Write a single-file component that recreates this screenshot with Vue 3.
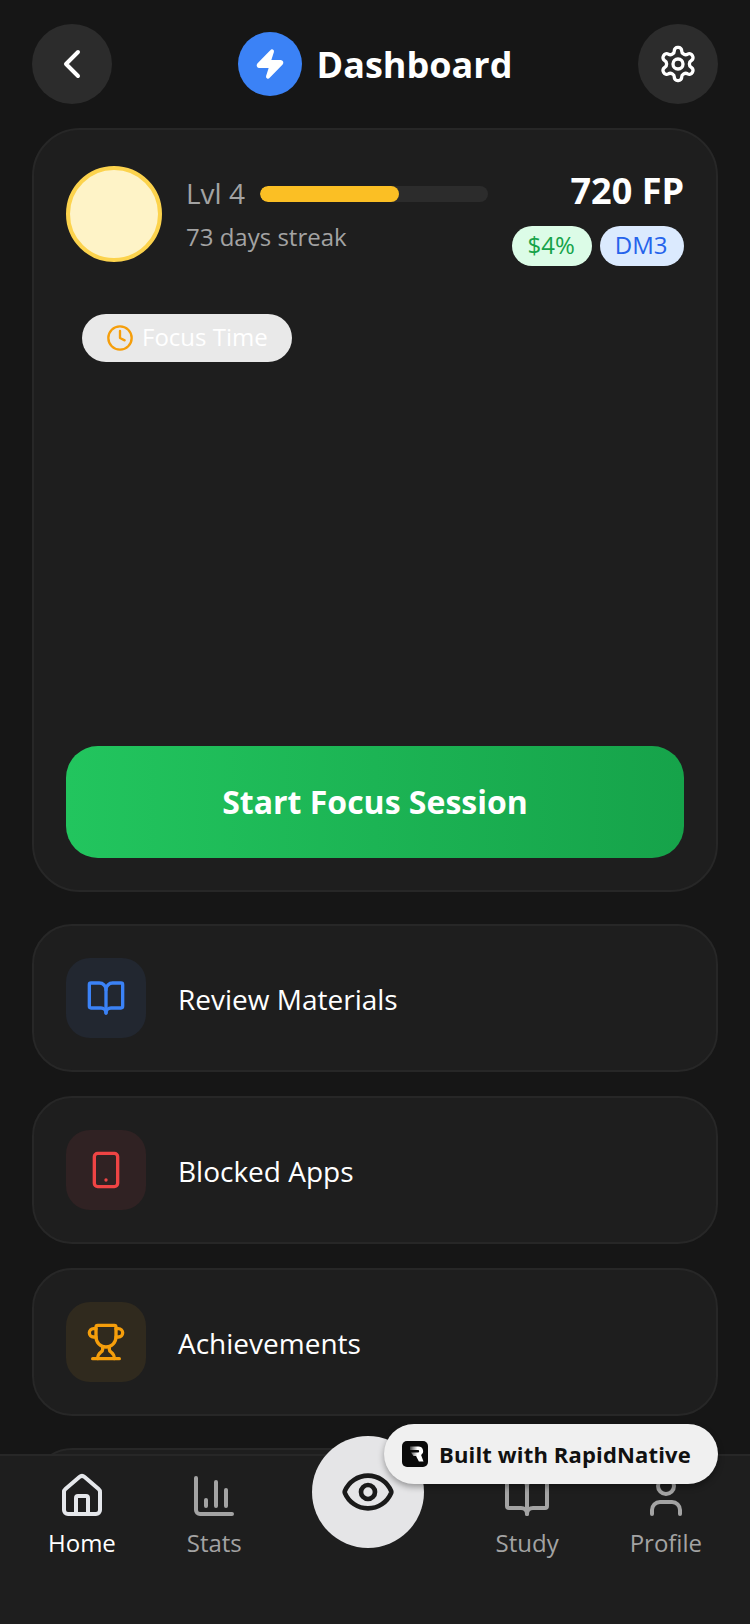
<script setup>
const rows = [
  { id: 'review', label: 'Review Materials', tone: 'blue' },
  { id: 'blocked', label: 'Blocked Apps', tone: 'red' },
  { id: 'achievements', label: 'Achievements', tone: 'amber' }
]
</script>

<template>
  <div class="screen">
    <main class="content">
      <header class="header">
        <button class="round-btn" type="button" aria-label="Back">
          <svg class="ico" width="48" height="48" viewBox="0 0 24 24"><path d="m15 18-6-6 6-6" /></svg>
        </button>
        <div class="brand">
          <span class="logo">
            <svg class="ico zap" width="32" height="32" viewBox="0 0 24 24"><path d="M4 14a1 1 0 0 1-.78-1.63l9.9-10.2a.5.5 0 0 1 .86.46l-1.92 6.02A1 1 0 0 0 13 10h7a1 1 0 0 1 .78 1.63l-9.9 10.2a.5.5 0 0 1-.86-.46l1.92-6.02A1 1 0 0 0 11 14z" /></svg>
          </span>
          <h1 class="title">Dashboard</h1>
        </div>
        <button class="round-btn" type="button" aria-label="Settings">
          <svg class="ico" width="40" height="40" viewBox="0 0 24 24"><path d="M12.22 2h-.44a2 2 0 0 0-2 2v.18a2 2 0 0 1-1 1.73l-.43.25a2 2 0 0 1-2 0l-.15-.08a2 2 0 0 0-2.73.73l-.22.38a2 2 0 0 0 .73 2.73l.15.1a2 2 0 0 1 1 1.72v.51a2 2 0 0 1-1 1.74l-.15.09a2 2 0 0 0-.73 2.73l.22.38a2 2 0 0 0 2.73.73l.15-.08a2 2 0 0 1 2 0l.43.25a2 2 0 0 1 1 1.73V20a2 2 0 0 0 2 2h.44a2 2 0 0 0 2-2v-.18a2 2 0 0 1 1-1.73l.43-.25a2 2 0 0 1 2 0l.15.08a2 2 0 0 0 2.73-.73l.22-.39a2 2 0 0 0-.73-2.73l-.15-.08a2 2 0 0 1-1-1.74v-.5a2 2 0 0 1 1-1.74l.15-.09a2 2 0 0 0 .73-2.73l-.22-.38a2 2 0 0 0-2.73-.73l-.15.08a2 2 0 0 1-2 0l-.43-.25a2 2 0 0 1-1-1.73V4a2 2 0 0 0-2-2z" /><circle cx="12" cy="12" r="3" /></svg>
        </button>
      </header>

      <section class="hero">
        <div class="stats">
          <div class="avatar"></div>
          <div class="progress">
            <div class="level">
              <span class="level-text">Lvl 4</span>
              <span class="track"><span class="fill"></span></span>
            </div>
            <div class="streak">73 days streak</div>
          </div>
          <div class="score">
            <div class="points">720 FP</div>
            <div class="chips">
              <span class="chip chip-green">$4%</span>
              <span class="chip chip-blue">DM3</span>
            </div>
          </div>
        </div>

        <div class="stage">
          <div class="pill">
            <svg class="ico" width="28" height="28" viewBox="0 0 24 24"><circle cx="12" cy="12" r="10" /><path d="M12 6v6l4 2" /></svg>
            <span>Focus Time</span>
          </div>
        </div>

        <button class="start" type="button">Start Focus Session</button>
      </section>

      <ul class="rows">
        <li v-for="row in rows" :key="row.id" class="row">
          <span class="row-icon" :class="`tone-${row.tone}`">
            <svg v-if="row.id === 'review'" class="ico" width="40" height="40" viewBox="0 0 24 24"><path d="M12 7v14" /><path d="M3 18a1 1 0 0 1-1-1V4a1 1 0 0 1 1-1h5a4 4 0 0 1 4 4 4 4 0 0 1 4-4h5a1 1 0 0 1 1 1v13a1 1 0 0 1-1 1h-6a3 3 0 0 0-3 3 3 3 0 0 0-3-3z" /></svg>
            <svg v-else-if="row.id === 'blocked'" class="ico" width="40" height="40" viewBox="0 0 24 24"><rect x="5" y="2" width="14" height="20" rx="2" ry="2" /><path d="M12 18h.01" /></svg>
            <svg v-else class="ico" width="40" height="40" viewBox="0 0 24 24"><path d="M10 14.66v1.626a2 2 0 0 1-.976 1.696A5 5 0 0 0 7 21.978" /><path d="M14 14.66v1.626a2 2 0 0 0 .976 1.696A5 5 0 0 1 17 21.978" /><path d="M18 9h1.5a1 1 0 0 0 0-5H18" /><path d="M4 22h16" /><path d="M6 9a6 6 0 0 0 12 0V3a1 1 0 0 0-1-1H7a1 1 0 0 0-1 1z" /><path d="M6 9H4.5a1 1 0 0 1 0-5H6" /></svg>
          </span>
          <span class="row-label">{{ row.label }}</span>
        </li>
        <li class="row row-clipped"></li>
      </ul>
    </main>

    <nav class="nav">
      <div class="tab tab-active">
        <svg class="ico" width="48" height="48" viewBox="0 0 24 24"><path d="M15 21v-8a1 1 0 0 0-1-1h-4a1 1 0 0 0-1 1v8" /><path d="M3 10a2 2 0 0 1 .709-1.528l7-5.999a2 2 0 0 1 2.582 0l7 5.999A2 2 0 0 1 21 10v9a2 2 0 0 1-2 2H5a2 2 0 0 1-2-2z" /></svg>
        <span>Home</span>
      </div>
      <div class="tab">
        <svg class="ico" width="48" height="48" viewBox="0 0 24 24"><path d="M3 3v16a2 2 0 0 0 2 2h16" /><path d="M18 17V9" /><path d="M13 17V5" /><path d="M8 17v-3" /></svg>
        <span>Stats</span>
      </div>
      <button class="focus-btn" type="button" aria-label="Focus">
        <svg class="ico" width="56" height="56" viewBox="0 0 24 24"><path d="M2.062 12.348a1 1 0 0 1 0-.696 10.75 10.75 0 0 1 19.876 0 1 1 0 0 1 0 .696 10.75 10.75 0 0 1-19.876 0" /><circle cx="12" cy="12" r="3" /></svg>
      </button>
      <div class="tab">
        <svg class="ico" width="48" height="48" viewBox="0 0 24 24"><path d="M12 7v14" /><path d="M3 18a1 1 0 0 1-1-1V4a1 1 0 0 1 1-1h5a4 4 0 0 1 4 4 4 4 0 0 1 4-4h5a1 1 0 0 1 1 1v13a1 1 0 0 1-1 1h-6a3 3 0 0 0-3 3 3 3 0 0 0-3-3z" /></svg>
        <span>Study</span>
      </div>
      <div class="tab">
        <svg class="ico" width="48" height="48" viewBox="0 0 24 24"><path d="M19 21v-2a4 4 0 0 0-4-4H9a4 4 0 0 0-4 4v2" /><circle cx="12" cy="7" r="4" /></svg>
        <span>Profile</span>
      </div>
    </nav>

    <div class="built">
      <svg class="built-logo" width="26" height="26" viewBox="0 0 26 26">
        <defs>
          <linearGradient id="rn-grad" x1="0" y1="0" x2="1" y2="0">
            <stop offset="0" stop-color="#444" />
            <stop offset="0.55" stop-color="#fff" />
          </linearGradient>
        </defs>
        <rect width="26" height="26" rx="5" fill="#0a0a0a" />
        <path d="M8 5.5h8.5a4.6 4.6 0 0 1 2.6 8.4L21.5 20.5h-4.6L14 15h-2.5L9 11.5h7a1.2 1.2 0 0 0 0-2.4H8z" fill="url(#rn-grad)" />
      </svg>
      <span>Built with RapidNative</span>
    </div>
  </div>
</template>

<style>
html, body { margin: 0; background: #161616; }
</style>

<style scoped>
.screen {
  position: relative;
  width: 750px;
  height: 1624px;
  display: flex;
  flex-direction: column;
  overflow: hidden;
  background: #161616;
  font-family: "Open Sans", "Noto Sans", sans-serif;
  color: #fff;
}
.content {
  flex: 1;
  min-height: 0;
  overflow: hidden;
  padding: 24px 32px 0;
}
.ico {
  display: block;
  flex: none;
  fill: none;
  stroke: currentColor;
  stroke-width: 2;
  stroke-linecap: round;
  stroke-linejoin: round;
}
.header {
  display: flex;
  align-items: center;
  justify-content: space-between;
  height: 80px;
  margin-bottom: 24px;
}
.round-btn {
  width: 80px;
  height: 80px;
  padding: 0;
  border: 0;
  border-radius: 50%;
  background: #2c2c2c;
  color: #fff;
  display: flex;
  align-items: center;
  justify-content: center;
}
.brand {
  display: flex;
  align-items: center;
  gap: 15px;
}
.logo {
  width: 64px;
  height: 64px;
  border-radius: 50%;
  background: #3b82f6;
  display: flex;
  align-items: center;
  justify-content: center;
  color: #fff;
}
.zap { fill: #fff; }
.title {
  margin: 0;
  padding-top: 2px;
  font-size: 36px;
  line-height: 48px;
  font-weight: 700;
}
.hero {
  box-sizing: border-box;
  height: 764px;
  border: 2px solid #272727;
  border-radius: 48px;
  background: #1e1e1e;
  padding: 32px;
  display: flex;
  flex-direction: column;
}
.stats {
  display: flex;
  align-items: center;
}
.avatar {
  box-sizing: border-box;
  width: 96px;
  height: 96px;
  border-radius: 50%;
  border: 4px solid #fcd34d;
  background: #fef3c7;
  flex: none;
}
.progress {
  margin-left: 24px;
  flex: 1;
}
.level {
  display: flex;
  align-items: center;
  gap: 15px;
}
.level-text {
  margin: -1px 0 1px;
  font-size: 28px;
  line-height: 38px;
  color: #a3a3a3;
}
.track {
  width: 228px;
  height: 16px;
  border-radius: 8px;
  background: #2c2c2c;
  overflow: hidden;
}
.fill {
  display: block;
  width: 61%;
  height: 100%;
  border-radius: 8px;
  background: #fbbf24;
}
.streak {
  margin-top: 8px;
  font-size: 24px;
  line-height: 32px;
  color: #a3a3a3;
}
.score {
  display: flex;
  flex-direction: column;
  align-items: flex-end;
}
.points {
  font-size: 36px;
  line-height: 58px;
  font-weight: 700;
}
.chips {
  display: flex;
  gap: 8px;
  margin-top: 6px;
}
.chip {
  height: 40px;
  border-radius: 20px;
  font-size: 24px;
  line-height: 38px;
}
.chip-green { padding: 0 17.5px 0 15.5px; background: #dcfce7; color: #16a34a; }
.chip-blue { padding: 0 16.5px 0 14.5px; background: #dbeafe; color: #2563eb; }
.stage {
  box-sizing: border-box;
  height: 480px;
  padding: 48px 0 0 16px;
}
.pill {
  display: inline-flex;
  align-items: center;
  gap: 8px;
  height: 48px;
  padding: 0 24px;
  border-radius: 24px;
  background: #e9e9e9;
  color: #f59e0b;
  font-size: 24px;
}
.pill span { margin-bottom: 4px; color: #fff; }
.start {
  height: 112px;
  padding: 0 0 2px;
  border: 0;
  border-radius: 32px;
  background: linear-gradient(90deg, #22c55e, #16a34a);
  color: #fff;
  font-family: inherit;
  font-size: 32px;
  font-weight: 700;
}
.rows {
  list-style: none;
  margin: 32px 0 0;
  padding: 0;
  display: flex;
  flex-direction: column;
  gap: 24px;
}
.row {
  box-sizing: border-box;
  flex: none;
  height: 148px;
  border: 2px solid #272727;
  border-radius: 40px;
  background: #1e1e1e;
  padding: 32px;
  display: flex;
  align-items: center;
  gap: 32px;
}
.row-clipped { margin-top: 8px; }
.row-icon {
  width: 80px;
  height: 80px;
  border-radius: 24px;
  display: flex;
  align-items: center;
  justify-content: center;
  flex: none;
}
.tone-blue { background: #222730; color: #3b82f6; }
.tone-red { background: #302223; color: #ef4444; }
.tone-amber { background: #302a1e; color: #f59e0b; }
.row-label {
  padding-top: 2px;
  font-size: 28px;
  line-height: 38px;
}
.nav {
  position: relative;
  box-sizing: border-box;
  flex: none;
  height: 170px;
  border-top: 2px solid #272727;
  background: #1e1e1e;
  padding: 16px 48px 0;
  display: flex;
  justify-content: space-between;
  align-items: flex-start;
}
.tab {
  display: flex;
  flex-direction: column;
  align-items: center;
  gap: 6px;
  color: #a3a3a3;
  font-size: 24px;
  line-height: 33px;
}
.tab-active { color: #fff; }
.tab-active .ico { color: #e5e7eb; }
.focus-btn {
  width: 112px;
  height: 112px;
  margin: -36px 1px 0 -1px;
  padding: 0;
  border: 0;
  border-radius: 50%;
  background: #e5e5e7;
  color: #1a1a1a;
  display: flex;
  align-items: center;
  justify-content: center;
}
.built {
  position: absolute;
  left: 384px;
  top: 1424px;
  box-sizing: border-box;
  width: 334px;
  height: 60px;
  padding-left: 18px;
  border-radius: 30px;
  background: #f0f0f0;
  box-shadow: 0 3px 6px rgba(0, 0, 0, 0.35);
  display: flex;
  align-items: center;
  gap: 11px;
  color: #111;
  font-size: 22px;
  font-weight: 700;
  letter-spacing: 0.15px;
  white-space: nowrap;
}
.built-logo { display: block; flex: none; }
</style>
